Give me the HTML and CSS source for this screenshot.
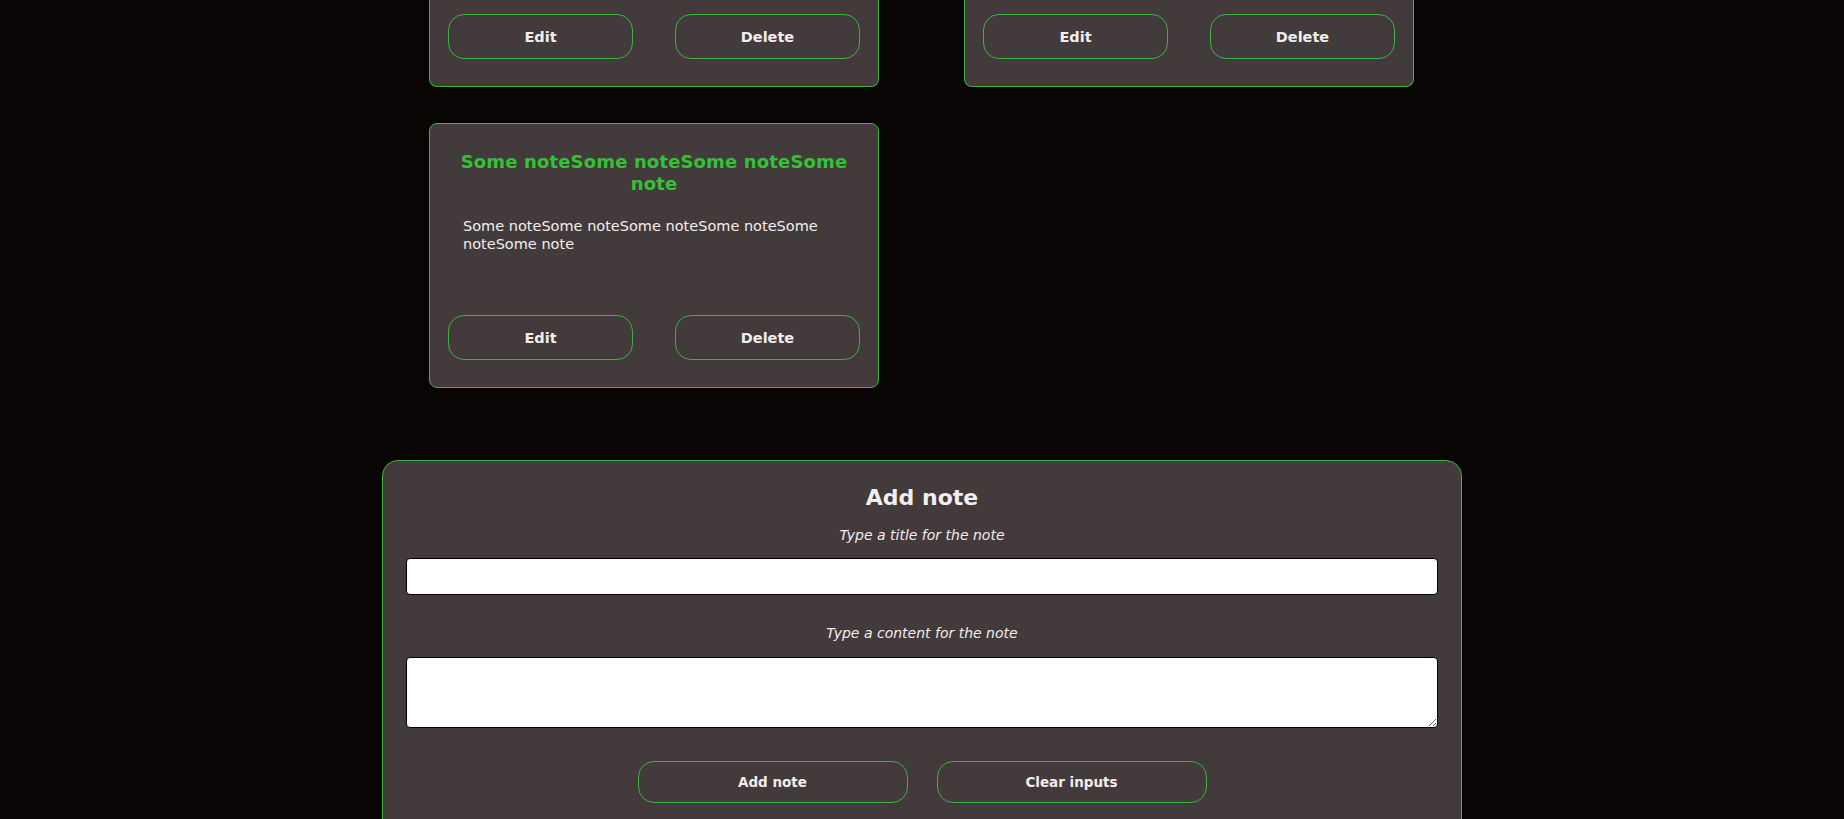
FILE: index.html
```html
<!DOCTYPE html>
<html lang="en">
<head>
<meta charset="utf-8">
<title>Notes</title>
<link rel="stylesheet" href="styles.css">
</head>
<body>
<main class="page">
  <section class="notes">
    <article class="card card--clipped">
      <div class="card__actions">
        <button class="btn btn--card">Edit</button>
        <button class="btn btn--card">Delete</button>
      </div>
    </article>
    <article class="card card--clipped">
      <div class="card__actions">
        <button class="btn btn--card">Edit</button>
        <button class="btn btn--card">Delete</button>
      </div>
    </article>
    <article class="card">
      <h3 class="card__title">Some noteSome noteSome noteSome note</h3>
      <p class="card__body">Some noteSome noteSome noteSome noteSome noteSome note</p>
      <div class="card__actions">
        <button class="btn btn--card">Edit</button>
        <button class="btn btn--card">Delete</button>
      </div>
    </article>
  </section>

  <form class="add-form">
    <h2 class="add-form__title">Add note</h2>
    <label class="add-form__label" for="title">Type a title for the note</label>
    <input class="add-form__input" id="title" type="text">
    <label class="add-form__label add-form__label--second" for="content">Type a content for the note</label>
    <textarea class="add-form__textarea" id="content"></textarea>
    <div class="add-form__actions">
      <button type="button" class="btn btn--form">Add note</button>
      <button type="button" class="btn btn--form">Clear inputs</button>
    </div>
  </form>
</main>
</body>
</html>
```

FILE: styles.css
```css
* {
  box-sizing: border-box;
}

html, body {
  margin: 0;
  padding: 0;
  background: #080504;
}

body {
  font-family: "DejaVu Sans", "Noto Sans", sans-serif;
  color: #f2eeee;
}

.page {
  display: flex;
  flex-direction: column;
  align-items: center;
}

.notes {
  display: grid;
  grid-template-columns: repeat(2, 450px);
  column-gap: 85px;
  row-gap: 36px;
  justify-content: center;
  padding-right: 1px;
}

.card {
  background: #423a3b;
  border: 1px solid #3fb23f;
  border-radius: 8px;
  height: 265px;
  display: flex;
  flex-direction: column;
  padding: 27px 0 27px;
}

.card--clipped {
  height: 87px;
  border-top: none;
  border-radius: 0 0 8px 8px;
  padding: 13px 0 27px;
}

.card__title {
  margin: 0;
  padding: 0 18px;
  text-align: center;
  color: #33c233;
  font-size: 18px;
  line-height: 22px;
  font-weight: bold;
  letter-spacing: 0.15px;
}

.card__body {
  margin: 22px 0 0;
  padding: 0 33px;
  font-size: 14.5px;
  line-height: 18px;
}

.card__actions {
  margin-top: auto;
  display: flex;
  justify-content: space-between;
  padding: 0 18px;
}

.btn {
  background: transparent;
  border: 1px solid #3fb23f;
  border-radius: 16px;
  color: #f2eeee;
  font-family: "DejaVu Sans", "Noto Sans", sans-serif;
  font-weight: bold;
  cursor: pointer;
}

.btn--card {
  width: 185px;
  height: 45px;
  font-size: 14.5px;
}

.add-form {
  margin-top: 72px;
  width: 1080px;
  background: #423a3b;
  border: 1px solid #3fb23f;
  border-radius: 16px;
  padding: 23px 23px 40px;
  display: flex;
  flex-direction: column;
  align-items: stretch;
}

.add-form__title {
  margin: 0;
  text-align: center;
  font-size: 22px;
  line-height: 28px;
  font-weight: bold;
}

.add-form__label {
  margin-top: 13px;
  text-align: center;
  font-style: italic;
  font-size: 14px;
  line-height: 20px;
}

.add-form__label--second {
  margin-top: 28px;
}

.add-form__input {
  margin-top: 13px;
  height: 37px;
  background: #fff;
  border: 1px solid #000;
  border-radius: 4px;
  font-family: inherit;
}

.add-form__textarea {
  margin-top: 14px;
  height: 71px;
  background: #fff;
  border: 1px solid #000;
  border-radius: 4px;
  font-family: inherit;
}

.add-form__actions {
  margin-top: 33px;
  display: flex;
  justify-content: center;
  gap: 29px;
}

.btn--form {
  width: 270px;
  height: 42px;
  font-size: 13.5px;
}
```
